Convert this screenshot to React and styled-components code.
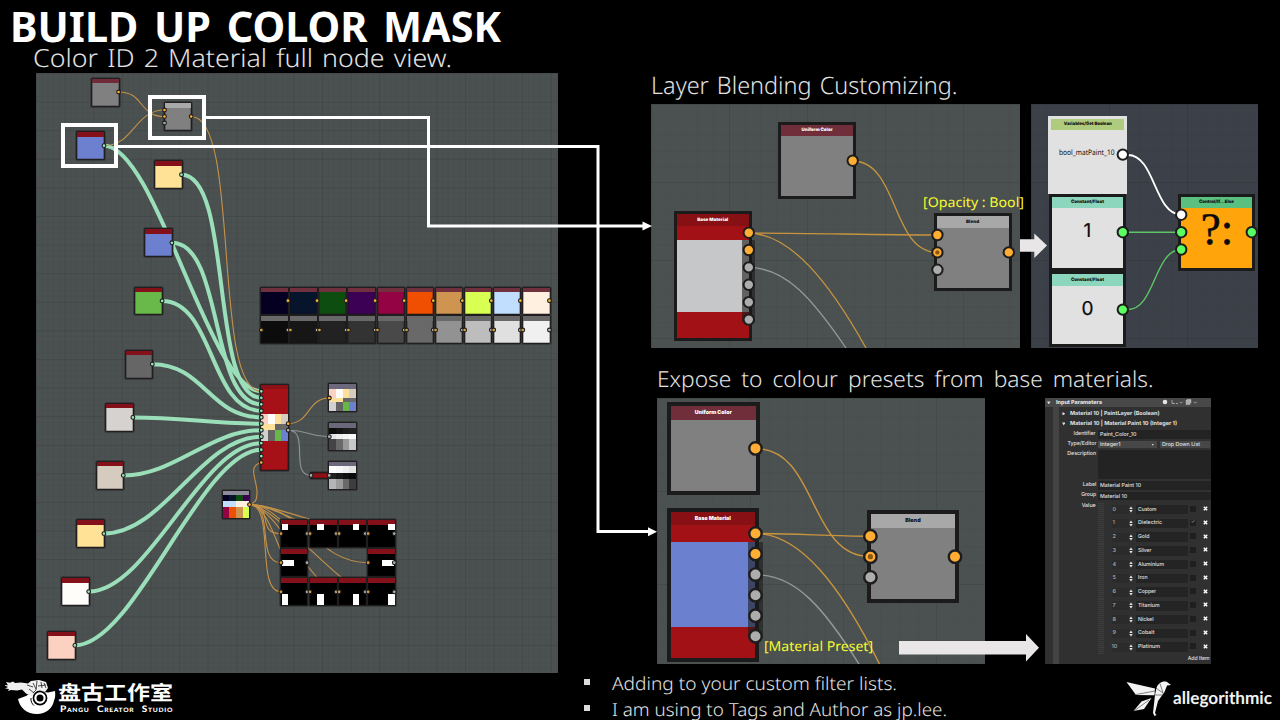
import React, { useLayoutEffect, useRef, useState } from "react";
import styled, { createGlobalStyle } from "styled-components";

const GlobalStyle = createGlobalStyle`
  * { box-sizing: border-box; }
  html, body { margin: 0; background: #000; overflow: hidden; text-rendering: geometricPrecision; }
  h1, h2, p, ul { margin: 0; padding: 0; font-weight: 400; }
`;

const ORANGE = "#ffae33";
const GREY = "#adadad";
const MINT = "#9adfb9";
const GREEN = "#5cff62";
const sans = `"Noto Sans", "Open Sans", sans-serif`;

/* ---------- page frame ---------- */

const Slide = styled.div`
  position: relative;
  display: flex;
  flex-direction: column;
  width: 1280px;
  height: 720px;
  overflow: hidden;
  background: #000;
  color: #e2e2e2;
  font-family: ${sans};
`;

const Main = styled.main`
  display: flex;
  height: 673px;
`;

const LeftColumn = styled.section`
  width: 651px;
`;

const RightColumn = styled.section`
  flex: 1;
`;

const Title = styled.h1`
  height: 42px;
  padding: 9px 0 0 9.5px;
  line-height: 33px;
  font-size: 42px;
  font-weight: 700;
  word-spacing: 5px;
  color: #fff;
`;

const Subtitle = styled.h2`
  height: 31px;
  padding-left: 32.5px;
  line-height: 31px;
  font-size: 25px;
  font-weight: 300;
  word-spacing: 2px;
`;

const SectionTitle = styled.h2`
  padding-left: ${(p) => p.$indent || 0}px;
  padding-top: ${(p) => p.$top}px;
  line-height: ${(p) => p.$line}px;
  font-size: ${(p) => p.$size}px;
  font-weight: 300;
  word-spacing: ${(p) => p.$word}px;
`;

const PanelRow = styled.div`
  display: flex;
  gap: ${(p) => p.$gap}px;
  padding-left: ${(p) => p.$indent || 0}px;
`;

const Footer = styled.footer`
  display: flex;
  height: 47px;
`;

const Bullets = styled.ul`
  list-style: none;
  width: 543px;
  margin-top: -3px;
`;

const Bullet = styled.li`
  display: flex;
  align-items: center;
  height: 26px;
  font-size: 18px;
  font-weight: 300;
  line-height: 26px;
  &::before {
    content: "";
    width: 6px;
    height: 6px;
    margin: -3px 22px 0 1px;
    background: #dcdcdc;
  }
`;

/* ---------- text fitted to a measured width ---------- */

const FitSpan = styled.span`
  display: inline-block;
  white-space: nowrap;
  transform-origin: ${(p) => p.$origin || "left"} center;
`;

function Fit({ width, origin, children }) {
  const ref = useRef(null);
  const [scale, setScale] = useState(1);
  useLayoutEffect(() => {
    setScale(width / parseFloat(getComputedStyle(ref.current).width));
  }, [width, children]);
  return (
    <FitSpan ref={ref} $origin={origin} style={{ transform: `translateY(1px) scaleX(${scale})` }}>
      {children}
    </FitSpan>
  );
}

/* ---------- node canvas ---------- */

const Viewport = styled.div`
  position: relative;
  width: ${(p) => p.$w}px;
  height: ${(p) => p.$h}px;
  margin-left: ${(p) => p.$indent || 0}px;
  overflow: hidden;
  background-color: ${(p) => p.$bg || "#4b5150"};
  background-image:
    linear-gradient(to right, rgba(0, 0, 0, 0.065) 1px, transparent 1px),
    linear-gradient(to bottom, rgba(0, 0, 0, 0.065) 1px, transparent 1px),
    linear-gradient(to right, rgba(0, 0, 0, 0.03) 1px, transparent 1px),
    linear-gradient(to bottom, rgba(0, 0, 0, 0.03) 1px, transparent 1px);
  background-size:
    ${(p) => p.$grid * 5}px ${(p) => p.$grid * 5}px,
    ${(p) => p.$grid * 5}px ${(p) => p.$grid * 5}px,
    ${(p) => p.$grid}px ${(p) => p.$grid}px,
    ${(p) => p.$grid}px ${(p) => p.$grid}px;
`;

const Plane = styled.div`
  position: absolute;
  left: ${(p) => -p.$x}px;
  top: ${(p) => -p.$y}px;
  width: 1280px;
  height: 720px;
`;

const Layer = styled.svg`
  position: absolute;
  left: 0;
  top: 0;
  width: 1280px;
  height: 720px;
  pointer-events: none;
`;

function Canvas({ x, y, w, h, bg, indent, grid, children }) {
  return (
    <Viewport $w={w} $h={h} $bg={bg} $indent={indent} $grid={grid}>
      <Plane $x={x} $y={y}>{children}</Plane>
    </Viewport>
  );
}

const NodeBox = styled.div`
  position: absolute;
  left: ${(p) => p.$x}px;
  top: ${(p) => p.$y}px;
  width: ${(p) => p.$w}px;
  height: ${(p) => p.$h}px;
  display: flex;
  flex-direction: column;
  border: ${(p) => p.$border}px solid ${(p) => p.$edge || "#1b1b1b"};
  background: ${(p) => p.$fill};
  overflow: hidden;
`;

const MiniBox = styled(NodeBox)`
  border-color: #211e1f;
  border-radius: 1px;
  box-shadow: 0 0 0 0.5px rgba(30, 27, 28, 0.75), inset 0 0 0 0.6px rgba(20, 18, 18, 0.5);
`;

const NodeHeader = styled.div`
  flex: none;
  display: flex;
  justify-content: center;
  align-items: center;
  height: ${(p) => p.$h}px;
  background: ${(p) => p.$color};
  color: ${(p) => p.$ink || "#fff"};
  font: 900 ${(p) => p.$size || 4.6}px/1 Inter, sans-serif;
`;

/* A header label keeps its centre while its width is fitted. */
const Label = ({ width, children }) => <Fit width={width} origin="center">{children}</Fit>;

const NodeBand = styled.div`
  flex: none;
  height: ${(p) => p.$h}px;
  background: ${(p) => p.$color};
`;

const NodeValue = styled.div`
  flex: 1;
  display: flex;
  justify-content: ${(p) => p.$align || "center"};
  padding: ${(p) => p.$pad || "0"};
  font: ${(p) => p.$font};
  color: #0b0b0b;
  -webkit-text-stroke: ${(p) => p.$stroke || 0}px #0b0b0b;
`;

const Swatches = styled.div`
  display: flex;
  flex: ${(p) => p.$grow};
`;

const Swatch = styled.i`
  flex: 1;
  background: ${(p) => p.$color};
`;

const Preview = styled.div`
  display: flex;
  flex-direction: column;
  flex: none;
  height: 27px;
`;

function Palette({ rows }) {
  return rows.map(([grow, colors], r) => (
    <Swatches key={r} $grow={grow}>
      {colors.map((c, i) => <Swatch key={i} $color={c} />)}
    </Swatches>
  ));
}

function MiniNode({ x, y, head = "#84101a", fill, children }) {
  return (
    <MiniBox $x={x} $y={y} $w={28.8} $h={28.8} $border={1} $fill={fill}>
      <NodeHeader $h={4.4} $color={head} />
      {children}
    </MiniBox>
  );
}

const curve = (x1, y1, x2, y2, c = 50) =>
  `M${x1} ${y1}C${x1 + c} ${y1} ${x2 - c} ${y2} ${x2} ${y2}`;

function Dots({ items, r, ring }) {
  return items.map(([x, y, color, inner], i) => (
    <g key={i}>
      <circle cx={x} cy={y} r={r} fill={color} stroke="#1d1d1d" strokeWidth={ring} />
      {inner && <circle cx={x} cy={y} r={r * 0.42} fill="#8f5716" />}
    </g>
  ));
}

/* ---------- full graph ---------- */

const SOURCES = [
  [76.3, 131.3, "#6c80cf"],
  [153.8, 160.3, "#ffe296"],
  [144.2, 228.4, "#6c80cf"],
  [134.4, 286.5, "#69b84a"],
  [124.6, 349.8, "#666666"],
  [105.2, 403, "#d5d2cf"],
  [95.6, 461, "#d5cbbf"],
  [76.2, 519.2, "#ffe296"],
  [61, 577.2, "#fefdf9"],
  [47.2, 631, "#fcd1c2"],
];
const INPUT_Y = [391.3, 397.8, 404.3, 410.8, 417.3, 423.7, 430.2, 436.7, 443.2, 449.7, 456.2];

const COLORS = ["#050022", "#06142c", "#0d4d10", "#3c0054", "#940444", "#f04e00", "#ce9450", "#d9ff52", "#c1deff", "#fff0e0"];
const GREYS = ["#0c0c0c", "#161616", "#222222", "#333333", "#494949", "#696969", "#929292", "#bdbdbd", "#e0e0e0", "#f0f0f0"];

const MATERIALS = [
  [16, ["#fbd1c4", "#fffdf9", "#fde09a", "#d6cdbf"]],
  [8.5, ["#fde09a", "#fde09a", "#666", "#696969"]],
  [16, ["#d3d1cf", "#646464", "#67b748", "#6c80cf"]],
];

const MASK_X = [279.7, 308.8, 337.9, 366.9];
const MASKS = [
  [0, 519.2, 1, 4.2, 6.5, 6],
  [1, 519.2, 7.5, 4.2, 6.3, 6],
  [2, 519.2, 14, 4.2, 6.3, 6],
  [3, 519.2, 20.5, 4.2, 6.3, 6],
  [0, 548.3, 1.5, 11, 12.3, 5.6],
  [3, 548.3, 14, 11, 12.3, 5.6],
  [0, 577.4, 1, 15.5, 6.5, 11],
  [1, 577.4, 7.5, 15.5, 6.3, 11],
  [2, 577.4, 13.7, 15.5, 6.3, 11],
  [3, 577.4, 20.5, 15.5, 6.3, 11],
];

const MaskBlock = styled.div`
  position: absolute;
  left: ${(p) => p.$x}px;
  top: ${(p) => p.$y}px;
  width: ${(p) => p.$w}px;
  height: ${(p) => p.$h}px;
  background: #fff;
`;

const Highlight = styled.div`
  position: absolute;
  left: ${(p) => p.$x}px;
  top: ${(p) => p.$y}px;
  width: ${(p) => p.$w}px;
  height: 45px;
  border: 4px solid #fff;
`;

function FullGraph() {
  const dots = [
    [118.6, 92, ORANGE],
    [164.5, 110, ORANGE],
    [164.5, 116.5, ORANGE],
    [164.5, 123, GREY],
    [191.2, 116.5, ORANGE],
    ...SOURCES.map(([x, y]) => [x + 27.7, y + 14.4, MINT]),
    ...INPUT_Y.map((y) => [261.3, y, MINT]),
    [261.3, 462.5, ORANGE],
    [288.2, 423.7, ORANGE],
    [288.2, 430.2, GREY],
    [329.3, 398, ORANGE],
    [329.3, 436.7, GREY],
    [311, 475.4, GREY],
    [329.3, 475.4, GREY],
    [249.5, 504.6, ORANGE],
    ...COLORS.map((_, i) => [288 + i * 29.05, 300.7, "#f3b42f"]),
    ...GREYS.map((_, i) => [288 + i * 29.05, 330, "#b9b9b9"]),
    ...GREYS.map((_, i) => [261.3 + i * 29.05, 330, "#d9a036"]),
    ...MASKS.map(([c, y]) => [MASK_X[c] + 27.4, y + 14.4, GREY]),
    ...MASKS.map(([c, y]) => [MASK_X[c] + 1.2, y + 14.4, "#df9a3c"]),
  ];
  return (
    <Canvas x={36} y={73} w={522} h={600} indent={36} grid={5.72}>
      <Layer fill="none" viewBox="0 0 1280 720">
        <g stroke={MINT} strokeWidth="4">
          {SOURCES.map(([x, y], i) => (
            <path key={i} d={curve(x + 27.7, y + 14.4, 261.3, INPUT_Y[i], i > 6 ? 60 : 52)} />
          ))}
        </g>
        <g stroke="#c4924a" strokeWidth="1.1">
          <path d={curve(118.6, 92, 164.5, 116.5, 26)} />
          <path d={curve(104, 145.7, 164.5, 110, 30)} />
          <path d={curve(191.2, 116.5, 261.3, 391.3, 50)} />
          <path d={curve(288.2, 423.7, 329.3, 398, 22)} />
          <path d="M261.3 462.5C247 466 257 480 257 492C257 501 255 503 249.5 504.6" />
          {MASKS.map(([c, y], i) => (
            <path key={i} d={curve(249.5, 504.6, MASK_X[c] + 1.2, y + 14.4, i === 5 ? 52 : 26)} />
          ))}
        </g>
        <g stroke="#8f9494" strokeWidth="1.1">
          <path d={curve(288.2, 430.2, 329.3, 436.7, 20)} />
          <path d={curve(288.2, 430.2, 311, 475.4, 22)} />
        </g>
      </Layer>
      <MiniNode x={91} y={77.8} head="#6f2b38" fill="#808080" />
      <MiniNode x={163.5} y={102.3} head="#a9a9a9" fill="#808080" />
      {SOURCES.map(([x, y, fill]) => <MiniNode key={y} x={x} y={y} fill={fill} />)}
      <MiniBox $x={260.3} $y={383.5} $w={28.8} $h={87} $border={1} $fill="#a51116">
        <NodeBand $h={4} $color="#8b1116" />
        <NodeBand $h={25} $color="#a51116" />
        <Preview><Palette rows={MATERIALS} /></Preview>
      </MiniBox>
      <MiniNode x={328.2} y={383.4} head="#6c687c" fill="#333"><Palette rows={MATERIALS} /></MiniNode>
      <MiniNode x={328.2} y={422.2} head="#6c687c" fill="#333">
        <Palette rows={[[9, ["#0c0c0c", "#141414", "#1d1d1d", "#222"]], [9, ["#e4e4e4", "#eee", "#f5f5f5", "#fafafa"]], [16, ["#444", "#686868", "#999", "#c8c8c8"]]]} />
      </MiniNode>
      <MiniBox $x={309.5} $y={472.2} $w={20} $h={6.6} $border={1} $fill="#8b1116" />
      <MiniNode x={328.2} y={461.1} head="#6c687c" fill="#333">
        <Palette rows={[[10, ["#fff", "#f8f8f8", "#f0f0f0", "#e4e4e4"]], [9, ["#222", "#191919", "#101010", "#0a0a0a"]], [16, ["#b5b5b5", "#9b9b9b", "#696969", "#3d3d3d"]]]} />
      </MiniNode>
      <MiniNode x={221.7} y={490} head="#8d8a99" fill="#333">
        <Palette rows={[[8, COLORS.slice(0, 4)], [9, [COLORS[8], COLORS[8], COLORS[9], COLORS[9]]], [16, COLORS.slice(4, 8)]]} />
      </MiniNode>
      {COLORS.map((c, i) => <MiniNode key={c} x={260.3 + i * 29.05} y={286.6} head="#70303d" fill={c} />)}
      {GREYS.map((c, i) => <MiniNode key={c} x={260.3 + i * 29.05} y={315.4} head="#686868" fill={c} />)}
      {MASKS.map(([c, y, mx, my, mw, mh], i) => (
        <MiniNode key={i} x={MASK_X[c]} y={y} fill="#000">
          <MaskBlock $x={mx} $y={my} $w={mw} $h={mh} />
        </MiniNode>
      ))}
      <Layer viewBox="0 0 1280 720"><Dots items={dots} r={1.9} ring={1.1} /></Layer>
      <Highlight $x={61} $y={123} $w={57} />
      <Highlight $x={148} $y={95} $w={58} />
    </Canvas>
  );
}

/* ---------- detail graphs ---------- */

const PortRail = styled.div`
  position: absolute;
  left: ${(p) => p.$x}px;
  top: ${(p) => p.$y}px;
  width: ${(p) => p.$w}px;
  height: ${(p) => p.$h}px;
  background: rgba(25, 25, 25, 0.58);
`;

function BlendGraph() {
  return (
    <Canvas x={651} y={104} w={369} h={243.5} grid={15.6}>
      <Layer fill="none" viewBox="0 0 1280 720" strokeWidth="1.3">
        <g stroke="#c8953f">
          <path d={curve(852.7, 161, 937.3, 252.4, 46)} />
          <path d={curve(748.7, 233, 937.3, 235, 60)} />
          <path d="M748.7 233C790 234 828 280 866 348" />
        </g>
        <path stroke="#949898" d="M748.7 267.4C786 268 812 298 846 348" />
      </Layer>
      <NodeBox $x={778.3} $y={121.7} $w={77.7} $h={77.6} $border={3} $fill="#808080">
        <NodeHeader $h={11.5} $color="#702d3a"><Label width={31}>Uniform Color</Label></NodeHeader>
      </NodeBox>
      <NodeBox $x={674} $y={211} $w={78} $h={130} $border={3} $fill="#a21115">
        <NodeHeader $h={12} $color="#861013"><Label width={31}>Base Material</Label></NodeHeader>
        <NodeBand $h={14.3} $color="#a21115" />
        <NodeBand $h={71.7} $color="#c5c7c9" />
      </NodeBox>
      <NodeBox $x={934} $y={213.3} $w={78} $h={78} $border={3} $fill="#808080">
        <NodeHeader $h={11.5} $color="#a8a8a8" $ink="#111"><Label width={13}>Blend</Label></NodeHeader>
      </NodeBox>
      <PortRail $x={742} $y={240} $w={13} $h={82} />
      <Layer viewBox="0 0 1280 720">
        <Dots
          r={5.2}
          ring={2}
          items={[
            [852.7, 160.7, ORANGE],
            [748.8, 232.7, ORANGE],
            [748.8, 250, ORANGE],
            [748.8, 267.4, GREY],
            [748.8, 284.8, GREY],
            [748.8, 302.2, GREY],
            [748.8, 319.6, GREY],
            [937.4, 235, ORANGE],
            [937.4, 252.4, ORANGE, true],
            [937.4, 269.8, GREY],
            [1008.8, 252.4, ORANGE],
          ]}
        />
      </Layer>
    </Canvas>
  );
}

function SwitchGraph() {
  return (
    <Canvas x={1031} y={104} w={227} h={244} bg="#3c4048" grid={15.6}>
      <NodeBox $x={1048.3} $y={115.7} $w={78.4} $h={78} $border={3.5} $edge="#e1e1e1" $fill="#e1e1e1">
        <NodeHeader $h={11.3} $color="#afcb7e" $ink="#111"><Label width={48}>Variables/Get Boolean</Label></NodeHeader>
        <NodeValue $align="flex-start" $pad="17.5px 0 0 8px" $font={`400 7.6px/11px "Noto Sans", sans-serif`}>
          <Fit width={55.5}>bool_matPaint_10</Fit>
        </NodeValue>
      </NodeBox>
      <NodeBox $x={1048.7} $y={193.7} $w={77.6} $h={77.6} $border={3} $fill="#e1e1e1">
        <NodeHeader $h={11.5} $color="#8cd6bd" $ink="#111"><Label width={33}>Constant/Float</Label></NodeHeader>
        <NodeValue $pad="11px 0 0" $font="400 19px/24px Inter, sans-serif" $stroke={0.2}>1</NodeValue>
      </NodeBox>
      <NodeBox $x={1048.7} $y={271.3} $w={77.6} $h={75.6} $border={3} $fill="#e1e1e1">
        <NodeHeader $h={11.5} $color="#8cd6bd" $ink="#111"><Label width={33}>Constant/Float</Label></NodeHeader>
        <NodeValue $pad="11px 0 0" $font="400 19px/24px Inter, sans-serif" $stroke={0.2}>0</NodeValue>
      </NodeBox>
      <NodeBox $x={1177.8} $y={193.5} $w={77.6} $h={77} $border={3} $fill="#ffa50b">
        <NodeHeader $h={11.7} $color="#59c07f" $ink="#111"><Label width={35}>Control/If...Else</Label></NodeHeader>
        <NodeValue $pad="0 0 0 1px" $font={`400 45px/42px "Liberation Serif", serif`} $stroke={0.6}>?:</NodeValue>
      </NodeBox>
      <Layer fill="none" viewBox="0 0 1280 720">
        <path stroke="#fff" strokeWidth="1.8" d={curve(1128, 155, 1181.3, 214.7, 27)} />
        <path stroke="#5cc665" strokeWidth="1.4" d="M1128 232.2H1181" />
        <path stroke="#5cc665" strokeWidth="1.4" d={curve(1128, 309.5, 1181.3, 249.5, 27)} />
        <Dots
          r={5.2}
          ring={2}
          items={[
            [1122.8, 154.6, "#fff"],
            [1122.8, 232.2, GREEN],
            [1122.8, 309.6, GREEN],
            [1181.2, 214.7, "#fff"],
            [1181.2, 232.2, GREEN],
            [1181.2, 249.5, GREEN],
            [1251.8, 232.2, GREEN],
          ]}
        />
      </Layer>
    </Canvas>
  );
}

function PresetGraph() {
  return (
    <Canvas x={657} y={398} w={328} h={266} grid={18.6}>
      <Layer fill="none" viewBox="0 0 1280 720" strokeWidth="1.4">
        <g stroke="#c8953f">
          <path d={curve(755.7, 448.6, 870.3, 556.7, 62)} />
          <path d={curve(755.7, 533.5, 870.3, 536.3, 40)} />
          <path d="M755.7 533.5C800 534 840 585 879.5 664" />
        </g>
        <path stroke="#949898" d="M755.7 575C796 574 825 610 859 664" />
      </Layer>
      <NodeBox $x={667} $y={402} $w={92.5} $h={92.6} $border={4} $fill="#808080">
        <NodeHeader $h={13.6} $color="#702d3a" $size={5.5}><Label width={37}>Uniform Color</Label></NodeHeader>
      </NodeBox>
      <NodeBox $x={667} $y={508} $w={92.3} $h={154} $border={4} $fill="#a21115">
        <NodeHeader $h={13} $color="#861013" $size={5.5}><Label width={36}>Base Material</Label></NodeHeader>
        <NodeBand $h={17.3} $color="#a21115" />
        <NodeBand $h={85} $color="#6b80cf" />
      </NodeBox>
      <NodeBox $x={866.6} $y={510.3} $w={92.3} $h={92.6} $border={4} $fill="#808080">
        <NodeHeader $h={13.6} $color="#a8a8a8" $ink="#111" $size={5.5}><Label width={15.5}>Blend</Label></NodeHeader>
      </NodeBox>
      <PortRail $x={747.5} $y={542} $w={15} $h={96} />
      <Layer viewBox="0 0 1280 720">
        <Dots
          r={6.2}
          ring={2.4}
          items={[
            [755.5, 448.4, ORANGE],
            [755.5, 533.5, ORANGE],
            [755.5, 554, ORANGE],
            [755.5, 574.6, GREY],
            [755.5, 595.2, GREY],
            [755.5, 615.7, GREY],
            [755.5, 636.2, GREY],
            [870.4, 536.2, ORANGE],
            [870.4, 556.7, ORANGE, true],
            [870.4, 577.3, GREY],
            [955, 556.7, ORANGE],
          ]}
        />
      </Layer>
    </Canvas>
  );
}

/* ---------- input parameters ---------- */

const Params = styled.div`
  display: flex;
  flex-direction: column;
  width: 165.5px;
  height: 266px;
  overflow: hidden;
  background: #303030;
  color: #e0e0e0;
  font: 500 5.5px/1 Inter, sans-serif;
  white-space: nowrap;
`;

const ParamsHead = styled.div`
  display: flex;
  align-items: center;
  height: 8.8px;
  padding-left: 2px;
  background: #484848;
  font-weight: 800;
`;

const Caret = styled.svg`
  flex: none;
  width: 3.5px;
  height: 3.5px;
  fill: #ddd;
  margin-right: ${(p) => p.$gap}px;
`;

const HeadTools = styled.svg`
  width: 40px;
  height: 8px;
  margin-left: 60px;
`;

const ParamsBody = styled.div`
  display: flex;
  flex: 1;
  padding-left: 8px;
`;

const Rail = styled.div`
  width: 6px;
  background: #434343;
`;

const Fields = styled.div`
  flex: 1;
  min-width: 0;
  padding-top: 0.8px;
`;

const Group = styled.div`
  display: flex;
  align-items: center;
  height: ${(p) => p.$h}px;
  padding-left: 2.5px;
  font-weight: 700;
`;

const Field = styled.div`
  display: flex;
  height: ${(p) => p.$h}px;
`;

const FieldLabel = styled.div`
  flex: none;
  width: 37px;
  padding: 1.6px 0 0 0;
  text-align: right;
`;

const Input = styled.div`
  flex: 1;
  margin: 1px 0 1px 2px;
  padding: 1.9px 0 0 1.5px;
  background: #232323;
`;

const Select = styled.div`
  width: ${(p) => p.$w}px;
  display: flex;
  justify-content: space-between;
  align-items: center;
  margin: 1px 1px 1px 2px;
  padding: 0 3px 0 1.5px;
  background: #474747;
`;

const Values = styled.div`
  padding-top: 1.6px;
`;

const ValueRow = styled.div`
  display: flex;
  align-items: center;
  height: 13.75px;
`;

const Grip = styled.div`
  width: 5.5px;
  height: 12.8px;
  margin: 0 8px 0 2px;
  background: repeating-linear-gradient(to bottom, #3d3d3d 0 1px, #323232 1px 2px);
`;

const ValueIndex = styled.div`
  width: 17.5px;
  height: 9px;
  padding: 2.6px 0 0 ${(p) => (p.$wide ? 0 : 1)}px;
  background: #2b2b2b;
  color: #b0b0b0;
`;

const Stepper = styled.svg`
  width: 4px;
  height: 7px;
  margin-right: 2.5px;
  fill: #e4e4e4;
`;

const ValueName = styled.div`
  width: 52px;
  height: 9.6px;
  padding: 1.9px 0 0 2.5px;
  background: #242424;
`;

const Check = styled.div`
  width: 6px;
  height: 6px;
  margin: -1.5px 6.5px 0 2.5px;
  background: #1f1f1f;
  color: #888;
  font-size: 5px;
  text-align: center;
`;

const Cross = styled.svg`
  width: 5px;
  height: 5px;
  margin-top: -2px;
  stroke: #fff;
  stroke-width: 1.4;
`;

const AddItem = styled.div`
  display: flex;
  justify-content: flex-end;
  padding: 1px 0.5px 0 0;
`;

const PRESETS = [
  ["Custom", 18.5], ["Dielectric", 24], ["Gold", 11.5], ["Silver", 13.5], ["Aluminium", 26], ["Iron", 9.5],
  ["Copper", 18], ["Titanium", 21.5], ["Nickel", 15.5], ["Cobalt", 16.5], ["Platinum", 22],
];

const Open = ({ gap }) => <Caret $gap={gap} viewBox="0 0 4 4"><path d="M0 .5h4L2 4z" /></Caret>;

function InputParameters() {
  return (
    <Params>
      <ParamsHead>
        <Open gap={5.2} />
        <Fit width={46}>Input Parameters</Fit>
        <HeadTools viewBox="0 0 40 8">
          <circle cx="3" cy="4" r="2.3" fill="#e4e4e4" />
          <path d="M10 2v3.500h3M14 5.500h2M18 3.800l1.300 1.400 1.300-1.400M32 3.800l1.300 1.400 1.300-1.400" fill="none" stroke="#aaa" strokeWidth=".9" />
          <path d="M24 2h4v4.500h-4zM25 1.500h4v4" fill="#aaa" stroke="#ccc" strokeWidth=".4" />
        </HeadTools>
      </ParamsHead>
      <ParamsBody>
        <Rail />
        <Fields>
          <Group $h={11.4}>
            <Caret $gap={4.5} viewBox="0 0 4 4"><path d="M.5 0v4L4 2z" /></Caret>
            <Fit width={89.5}>Material 10 | PaintLayer (Boolean)</Fit>
          </Group>
          <Group $h={10.4}>
            <Open gap={4.5} />
            <Fit width={107}>Material 10 | Material Paint 10 (Integer 1)</Fit>
          </Group>
          <Field $h={10.2}>
            <FieldLabel><Fit width={22} origin="right">Identifier</Fit></FieldLabel>
            <Input><Fit width={36.5}>Paint_Color_10</Fit></Input>
          </Field>
          <Field $h={9.8}>
            <FieldLabel><Fit width={29} origin="right">Type/Editor</Fit></FieldLabel>
            <Select $w={60}><Fit width={20.5}>Integer1</Fit><Caret $gap={0} viewBox="0 0 4 4"><path d="M.8 1h2.400L2 3z" /></Caret></Select>
            <Select $w={50}><Fit width={38}>Drop Down List</Fit></Select>
          </Field>
          <Field $h={31}>
            <FieldLabel><Fit width={29} origin="right">Description</Fit></FieldLabel>
            <Input />
          </Field>
          <Field $h={10.4}>
            <FieldLabel><Fit width={13.5} origin="right">Label</Fit></FieldLabel>
            <Input><Fit width={41}>Material Paint 10</Fit></Input>
          </Field>
          <Field $h={10.4}>
            <FieldLabel><Fit width={15} origin="right">Group</Fit></FieldLabel>
            <Input><Fit width={27}>Material 10</Fit></Input>
          </Field>
          <Field $h={153.5}>
            <FieldLabel><Fit width={14} origin="right">Value</Fit></FieldLabel>
            <Values>
              {PRESETS.map(([name, w], i) => (
                <ValueRow key={name}>
                  <Grip />
                  <ValueIndex $wide={i > 9}>{i}</ValueIndex>
                  <Stepper viewBox="0 0 4 7"><path d="M.3 3L2 .5 3.700 3zM.3 4L2 6.500 3.700 4z" /></Stepper>
                  <ValueName><Fit width={w}>{name}</Fit></ValueName>
                  <Check>{i === 1 ? "✓" : ""}</Check>
                  <Cross viewBox="0 0 5 5"><path d="M.8 .8l3.400 3.400M4.200 .8L.8 4.200" /></Cross>
                </ValueRow>
              ))}
            </Values>
          </Field>
          <AddItem><Fit width={22} origin="right">Add Item</Fit></AddItem>
        </Fields>
      </ParamsBody>
    </Params>
  );
}

/* ---------- logos ---------- */

const StudioLogo = styled.div`
  display: flex;
  width: 583px;
  padding: 6px 0 0 5px;
  color: #fff;
`;

const StudioNames = styled.div`
  display: flex;
  flex-direction: column;
  margin: 1px 0 0 1px;
`;

const StudioHan = styled.div`
  height: 23px;
  font: 700 20px/21px "Noto Sans CJK SC", sans-serif;
`;

const StudioLatin = styled.div`
  padding-left: 2px;
  font: 900 9px/10px Lato, sans-serif;
  font-variant: small-caps;
  letter-spacing: 0.6px;
  word-spacing: 4px;
`;

const BrandLogo = styled.div`
  display: flex;
  align-items: flex-start;
  color: #f2f2f2;
`;

const BrandName = styled.div`
  padding: 12px 0 0 1px;
  font: 700 17.5px/24px Lato, sans-serif;
`;

function Pangu() {
  return (
    <StudioLogo>
      <svg width="52" height="36" viewBox="5 679 52 36">
        <path d="M18 699l8-3 8-5 14 1.500 7-1.500c.5 4 .3 7-1 9.500-1.500 8-8 13.500-17 13.500-10 0-17-6-19-15z" fill="#fff" />
        <circle cx="40" cy="698" r="7.400" fill="#000" />
        <circle cx="40" cy="698" r="4.600" fill="#000" stroke="#fff" strokeWidth="2.200" />
        <path d="M31 698c-.5 3 1 6 3 7.500" fill="none" stroke="#000" strokeWidth="1" />
        <path d="M6 682l4 .8 3-1.300 2 1.500 6-.5 7 1 3-2.500 8-1 7 2 2 6-3 4-5-1.500-5 1-3 5-6-3-4-4-5 1-6-.5-3 1 1-2-4-.5 3-1.500-4-2 4 .3z" fill="#f0f0f0" />
        <path d="M27 685l6 2M29 689l5 4M33 683l3 6M37 681l-1 9M41 682l1 6M38 686l8-1M33 693l3-3M44 683l2 5" stroke="#1c1c1c" strokeWidth=".8" fill="none" />
      </svg>
      <StudioNames>
        <StudioHan><Fit width={115}>盘古工作室</Fit></StudioHan>
        <StudioLatin><Fit width={113}>Pangu Creator Studio</Fit></StudioLatin>
      </StudioNames>
    </StudioLogo>
  );
}

function Allegorithmic() {
  return (
    <BrandLogo>
      <svg width="46" height="44" viewBox="1126 673 46 44">
        <g fill="#f4f4f4">
          <path d="M1126.500 682l28.500 6.500-.5 6.800-18.500-.3z" />
          <path d="M1155 695l1.500-7c1.500-4.500 6-7.500 10.500-6l4 3-4 .5-2.500 6.500-6.500 9-3 12 1.500 2-2 1-1.500-3z" />
          <path d="M1151.500 698l-10 3.500-8 9.500 10.500-2z" />
        </g>
        <path d="M1156 688l7 5M1154.500 695h9M1160 683.500l3 9.500M1136 694.500l19-3.500M1134 711l15-11" stroke="#333" strokeWidth=".6" fill="none" />
      </svg>
      <BrandName><Fit width={99}>allegorithmic</Fit></BrandName>
    </BrandLogo>
  );
}

/* ---------- callouts over the panels ---------- */

const Callout = styled.div`
  position: absolute;
  left: ${(p) => p.$x}px;
  top: ${(p) => p.$y}px;
  font-size: 13.5px;
  line-height: 18px;
  color: #f6fa2e;
`;

function Connectors() {
  return (
    <Layer viewBox="0 0 1280 720">
      <g fill="none" stroke="#fff" strokeWidth="3">
        <path d="M205 117.500H428.500V226H643" />
        <path d="M117 146.500H598V531.500H649" />
      </g>
      <path d="M642.500 221.500L652 226l-9.500 4.500zM648 527.300l9 4.500-9 4.500z" fill="#fff" />
      <path d="M1020 239.200H1034.300V233.500L1047 245.500 1034.300 258V251.700H1020z" fill="#e8e6e7" />
      <path d="M899 641H1026V634L1039 647.700 1026 661.500V654.500H899z" fill="#e8e6e7" />
    </Layer>
  );
}

export default function App() {
  return (
    <Slide>
      <GlobalStyle />
      <Main>
        <LeftColumn>
          <Title><Fit width={491}>BUILD UP COLOR MASK</Fit></Title>
          <Subtitle><Fit width={419}>Color ID 2 Material full node view.</Fit></Subtitle>
          <FullGraph />
        </LeftColumn>
        <RightColumn>
          <SectionTitle $top={66} $line={38} $size={24} $word={2}>
            <Fit width={306.5}>Layer Blending Customizing.</Fit>
          </SectionTitle>
          <PanelRow $gap={11}>
            <BlendGraph />
            <SwitchGraph />
          </PanelRow>
          <SectionTitle $indent={5.5} $top={10} $line={40} $size={22} $word={4}>
            <Fit width={496.5}>Expose to colour presets from base materials.</Fit>
          </SectionTitle>
          <PanelRow $gap={60} $indent={6}>
            <PresetGraph />
            <InputParameters />
          </PanelRow>
        </RightColumn>
      </Main>
      <Footer>
        <Pangu />
        <Bullets>
          <Bullet><Fit width={285}>Adding to your custom filter lists.</Fit></Bullet>
          <Bullet><Fit width={335}>I am using to Tags and Author as jp.lee.</Fit></Bullet>
        </Bullets>
        <Allegorithmic />
      </Footer>
      <Connectors />
      <Callout $x={923} $y={192}><Fit width={101}>[Opacity : Bool]</Fit></Callout>
      <Callout $x={764} $y={636}><Fit width={109}>[Material Preset]</Fit></Callout>
    </Slide>
  );
}
